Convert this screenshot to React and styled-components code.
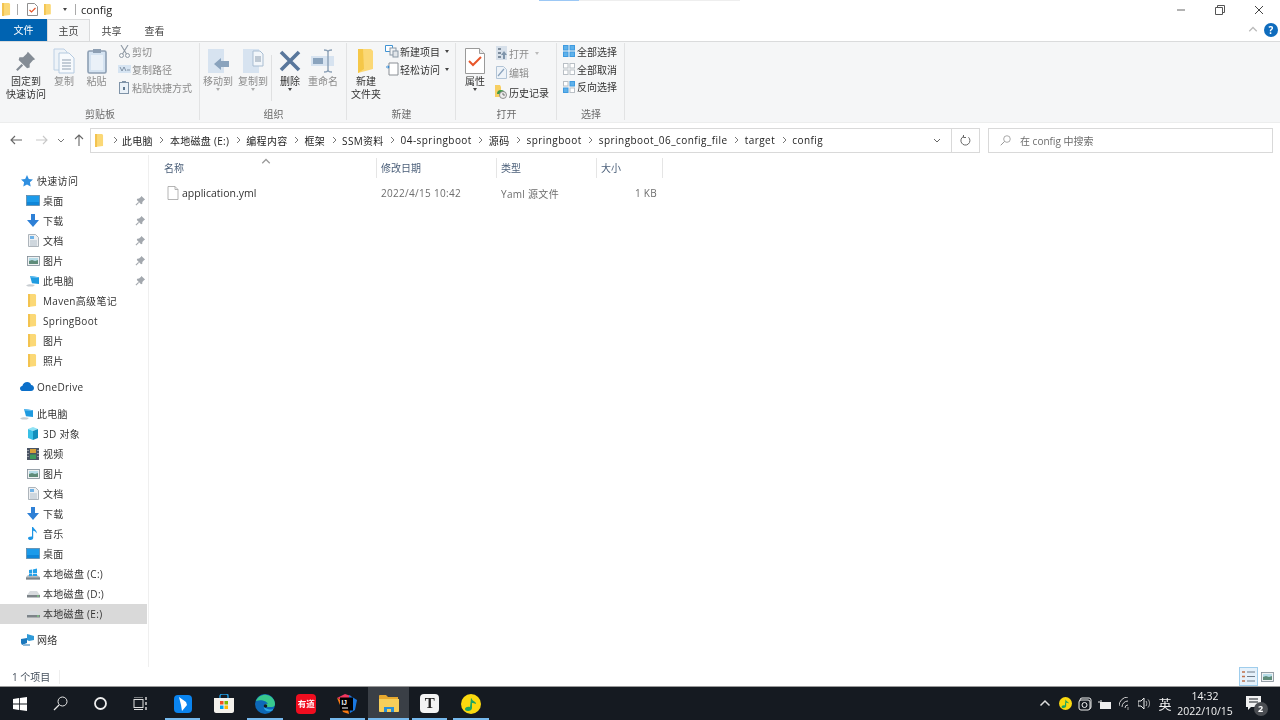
import styled, { createGlobalStyle } from 'styled-components';

const GlobalStyle = createGlobalStyle`
    html, body {
        margin: 0;
        padding: 0;
        background: #fff;
        overflow: hidden;
    }
    body {
        font-family: "Open Sans", "Noto Sans CJK SC", sans-serif;
        font-size: 10px;
        color: #333;
    }
    * { box-sizing: border-box; }
    svg { display: block; flex-shrink: 0; }
`;

const Page = styled.div`
    position: relative;
    width: 1280px;
    height: 720px;
    display: flex;
    flex-direction: column;
    overflow: hidden;
    filter: blur(0.3px);
`;

const TopGlow = styled.div`
    position: absolute;
    top: 0;
    left: 539px;
    width: 201px;
    height: 1px;
    background: linear-gradient(90deg, #9cc8f5 0, #9cc8f5 40px, #eee 40px);
`;

/* title bar */
const TitleBar = styled.div`
    height: 19px;
    display: flex;
    align-items: center;
    flex-shrink: 0;
`;

const QuickTools = styled.div`
    display: flex;
    align-items: center;
    padding-left: 2px;
`;

const TitleSep = styled.div`
    width: 1px;
    height: 11px;
    background: #aaa;
    margin: 0 ${p => p.$r}px 0 ${p => p.$l}px;
`;

const TitleIcon = styled.div`
    width: 14px;
    display: flex;
    justify-content: center;
    margin-right: 2px;
`;

const TitleText = styled.div`
    font-size: 11px;
    color: #222;
`;

const WinControls = styled.div`
    margin-left: auto;
    display: flex;
    padding-right: 2px;
`;

const WinBtn = styled.div`
    width: 39px;
    height: 19px;
    display: flex;
    align-items: center;
    justify-content: center;
`;

/* tabs */
const TabBar = styled.div`
    height: 22px;
    display: flex;
    align-items: stretch;
    flex-shrink: 0;
    position: relative;
`;

const FileTab = styled.div`
    width: 47px;
    background: #0063b1;
    color: #fff;
    display: flex;
    align-items: center;
    justify-content: center;
    padding-bottom: 1px;
`;

const Tab = styled.div`
    width: 43px;
    display: flex;
    align-items: center;
    justify-content: center;
    padding-bottom: 1px;
    color: #444;
    background: ${p => (p.$active ? '#f5f6f7' : 'transparent')};
    border: 1px solid ${p => (p.$active ? '#dadbdc' : 'transparent')};
    border-bottom: none;
`;

const TabTools = styled.div`
    margin-left: auto;
    display: flex;
    align-items: center;
    gap: 6px;
    padding-right: 2px;
`;

const HelpDot = styled.div`
    width: 14px;
    height: 14px;
    border-radius: 50%;
    background: #0f6cbd;
    color: #fff;
    font-size: 10px;
    font-weight: 700;
    line-height: 14px;
    text-align: center;
`;

/* ribbon */
const Ribbon = styled.div`
    height: 82px;
    flex-shrink: 0;
    display: flex;
    background: #f5f6f7;
    border-top: 1px solid #dadbdc;
    border-bottom: 1px solid #eceded;
`;

const Group = styled.div`
    width: ${p => p.$w}px;
    display: flex;
    flex-direction: column;
    position: relative;
    &::after {
        content: '';
        position: absolute;
        right: 0;
        top: 1px;
        bottom: 2px;
        width: 1px;
        background: #e2e3e4;
    }
`;

const GroupBody = styled.div`
    height: 65px;
    display: flex;
    padding-left: ${p => p.$pl || 0}px;
`;

const GroupLabel = styled.div`
    height: 14px;
    line-height: 14px;
    text-align: center;
    color: #6a6a6a;
`;

const BigBtn = styled.div`
    width: ${p => p.$w}px;
    flex-shrink: 0;
    display: flex;
    flex-direction: column;
    align-items: center;
    padding-top: 4px;
    color: ${p => (p.$off ? '#8c8c8c' : '#333')};
    line-height: 13px;
    text-align: center;
    white-space: nowrap;
`;

const BigIcon = styled.div`
    height: 29px;
    display: flex;
    align-items: center;
    justify-content: center;
`;

const Caret = styled.div`
    width: 0;
    height: 0;
    margin: ${p => p.$m || '0 auto'};
    border-left: 2.5px solid transparent;
    border-right: 2.5px solid transparent;
    border-top: 3px solid ${p => p.$c || '#444'};
`;

const VLine = styled.div`
    width: 1px;
    height: 46px;
    margin: 13px 1px 0;
    background: #dfe0e1;
`;

const Stack = styled.div`
    display: flex;
    flex-direction: column;
    padding-top: ${p => p.$top}px;
`;

const StackItem = styled.div`
    height: ${p => p.$h}px;
    display: flex;
    align-items: center;
    gap: 1px;
    color: ${p => (p.$off ? '#8c8c8c' : '#333')};
    white-space: nowrap;
`;

const IconSlot = styled.div`
    width: 14px;
    height: 14px;
    display: flex;
    align-items: center;
    justify-content: center;
    flex-shrink: 0;
`;

/* address row */
const NavRow = styled.div`
    height: 30px;
    margin-top: 2px;
    flex-shrink: 0;
    display: flex;
    align-items: center;
`;

const NavBtns = styled.div`
    width: 90px;
    display: flex;
    align-items: center;
`;

const NavBtn = styled.div`
    width: ${p => p.$w}px;
    display: flex;
    justify-content: center;
`;

const AddressBox = styled.div`
    width: 890px;
    height: 25px;
    border: 1px solid #d9d9d9;
    display: flex;
    align-items: center;
    padding-left: 2px;
`;

const Crumb = styled.div`
    display: flex;
    align-items: center;
    color: #222;
    white-space: nowrap;
    letter-spacing: ${p => (p.$latin ? '.45px' : '.3px')};
`;

const CrumbArrow = styled.div`
    width: ${p => (p.$first ? 15 : 17)}px;
    display: flex;
    justify-content: center;
`;

const AddrEnd = styled.div`
    margin-left: auto;
    display: flex;
    align-items: center;
    height: 100%;
`;

const AddrDrop = styled.div`
    width: 28px;
    height: 100%;
    display: flex;
    align-items: center;
    justify-content: center;
    border-right: 1px solid #d9d9d9;
    padding-right: 2px;
`;

const AddrRefresh = styled.div`
    width: 27px;
    display: flex;
    justify-content: center;
`;

const SearchBox = styled.div`
    margin-left: 8px;
    width: 285px;
    height: 25px;
    border: 1px solid #d9d9d9;
    display: flex;
    align-items: center;
    gap: 9px;
    padding-left: 11px;
    color: #6d6d6d;
`;

/* main area */
const Body = styled.div`
    flex: 1;
    min-height: 0;
    display: flex;
`;

const Sidebar = styled.div`
    width: 149px;
    flex-shrink: 0;
    padding-top: 15.5px;
    border-right: 1px solid #efefef;
    margin-right: 6px;
`;

const SideRow = styled.div`
    width: 147px;
    height: 20px;
    display: flex;
    align-items: center;
    gap: 3px;
    padding-left: ${p => (p.$top ? 20 : 26)}px;
    padding-right: 1px;
    margin-top: ${p => p.$gap || 0}px;
    background: ${p => (p.$sel ? '#d9d9d9' : 'transparent')};
    color: #333;
    white-space: nowrap;
    letter-spacing: .3px;
`;

const PinSlot = styled.div`
    margin-left: auto;
`;

const Content = styled.div`
    flex: 1;
    min-width: 0;
`;

const FileGrid = styled.div`
    display: grid;
    grid-template-columns: 222px 120px 100px 66px;
    height: 20px;
    align-items: center;
`;

const HeaderRow = styled(FileGrid)`
    margin-top: 2.5px;
    color: #4c607a;
`;

const HeaderCell = styled.div`
    position: relative;
    height: 100%;
    display: flex;
    align-items: center;
    padding-left: ${p => p.$pl || 4}px;
    border-right: 1px solid #e5e5e5;
`;

const SortMark = styled.div`
    position: absolute;
    left: 50%;
    top: -1px;
    margin-left: -5px;
`;

const FileRow = styled(FileGrid)`
    margin-top: 5.5px;
    color: #6d6d6d;
`;

const NameCell = styled.div`
    display: flex;
    align-items: center;
    gap: 3px;
    padding-left: 12px;
    color: #333;
    font-size: 10.5px;
`;

const Cell = styled.div`
    padding-left: 4px;
    padding-right: 6px;
    letter-spacing: .3px;
    text-align: ${p => (p.$right ? 'right' : 'left')};
`;

/* status */
const StatusBar = styled.div`
    height: 20px;
    flex-shrink: 0;
    display: flex;
    align-items: center;
    padding-left: 12px;
    border-bottom: 1px solid #9a9a9a;
    color: #444f5c;
`;

const StatusSep = styled.div`
    width: 1px;
    height: 14px;
    background: #eee;
    margin-left: 9px;
`;

const ViewBtns = styled.div`
    margin-left: auto;
    display: flex;
    align-items: center;
    padding-right: 3px;
`;

const ViewBtn = styled.div`
    width: 19px;
    height: 19px;
    display: flex;
    align-items: center;
    justify-content: center;
    background: ${p => (p.$active ? '#e5f1fb' : 'transparent')};
    border: 1px solid ${p => (p.$active ? '#9fcdec' : 'transparent')};
`;

/* taskbar */
const Taskbar = styled.div`
    height: 33px;
    flex-shrink: 0;
    display: flex;
    align-items: stretch;
    background: #151a21;
    color: #f2f2f2;
`;

const SysBtn = styled.div`
    width: 40px;
    display: flex;
    align-items: center;
    justify-content: center;
`;

const Apps = styled.div`
    margin-left: 2px;
    display: flex;
`;

const AppBtn = styled.div`
    position: relative;
    width: 41.2px;
    display: flex;
    align-items: center;
    justify-content: center;
    background: ${p => (p.$active ? '#3a3f46' : 'transparent')};
    &::after {
        content: '';
        display: ${p => (p.$open ? 'block' : 'none')};
        position: absolute;
        left: ${p => (p.$active ? 0 : 3)}px;
        right: ${p => (p.$active ? 0 : 3)}px;
        bottom: 0;
        height: 2px;
        background: #76b9ed;
    }
`;

const Tray = styled.div`
    margin-left: auto;
    display: flex;
    align-items: stretch;
`;

const TrayItem = styled.div`
    width: 20px;
    display: flex;
    align-items: center;
    justify-content: center;
    font-size: ${p => (p.$text ? '13px' : 'inherit')};
`;

const Clock = styled.div`
    width: 60px;
    display: flex;
    flex-direction: column;
    align-items: center;
    justify-content: center;
    line-height: 15px;
    font-size: 10.5px;
    white-space: nowrap;
`;

const Notify = styled.div`
    width: 45px;
    display: flex;
    align-items: center;
    justify-content: center;
    padding-right: 8px;
    position: relative;
`;

const NotifyBadge = styled.div`
    position: absolute;
    left: 18.500px;
    top: 15px;
    width: 14px;
    height: 14px;
    border-radius: 50%;
    background: #4a4d52;
    color: #fff;
    font-size: 9px;
    font-weight: 700;
    line-height: 14px;
    text-align: center;
`;

const FolderSmall = ({ h = 13 }) => (
    <svg width={h * 0.7} height={h} viewBox="0 0 9 13">
        <path d="M0 0h7l1 1v11l-8 1z" fill="#fbd876" />
        <path d="M0 0h2v13H0z" fill="#f3c34f" />
    </svg>
);

const Pin = ({ size = 11, c = '#a3a8ae' }) => (
    <svg width={size} height={size} viewBox="0 0 12 12">
        <path d="M7 1l4 4-1.2.6L8 7.600 8 9.600 6.600 10 2 5.400 2.400 4l2-.1 2-1.800z" fill={c} />
        <path d="M4 8L1 11" stroke={c} strokeWidth="1.200" />
    </svg>
);

const Chevron = ({ dir = 'right', c = '#777', size = 8 }) => {
    const d = {
        right: 'M3 1l3 3-3 3',
        down: 'M1 3l3 3 3-3',
        up: 'M1 5l3-3 3 3',
    }[dir];
    return (
        <svg width={size} height={size} viewBox="0 0 8 8">
            <path d={d} fill="none" stroke={c} strokeWidth="1" />
        </svg>
    );
};

const StarIcon = () => (
    <svg width="12" height="12" viewBox="0 0 12 12">
        <path d="M6 0l1.800 3.900 4.200.5-3.100 2.900.8 4.200L6 9.400l-3.700 2.100.8-4.200L0 4.400l4.200-.5z" fill="#2f8fe0" />
    </svg>
);

const DesktopIcon = () => (
    <svg width="14" height="11" viewBox="0 0 14 11">
        <rect x="0.5" y="0.5" width="13" height="10" fill="#1c9bea" stroke="#5e88a8" strokeWidth="0.8" />
        <path d="M1 7h12v3H1z" fill="#0f86d8" />
    </svg>
);

const DownloadIcon = () => (
    <svg width="12" height="13" viewBox="0 0 12 13">
        <path d="M4 0h4v6h4l-6 7-6-7h4z" fill="#2e80d6" />
    </svg>
);

const DocIcon = () => (
    <svg width="11" height="13" viewBox="0 0 11 13">
        <path d="M.5.5h7l3 3v9H.5z" fill="#eef0f2" stroke="#9aa3ab" strokeWidth=".8" />
        <path d="M2 2h4v3H2z" fill="#6fb2e6" />
        <path d="M2 7h7M2 9h7M2 11h7" stroke="#9fb0bf" strokeWidth=".8" />
    </svg>
);

const PictureIcon = () => (
    <svg width="13" height="10" viewBox="0 0 13 10">
        <rect x=".5" y=".5" width="12" height="9" fill="#f0f2f3" stroke="#7f8a94" strokeWidth=".8" />
        <path d="M2 2h9v3H2z" fill="#b6dce8" />
        <path d="M2 5l3-1 3 1 3-1v4H2z" fill="#5f8c7a" />
    </svg>
);

const PcIcon = () => (
    <svg width="14" height="12" viewBox="0 0 14 12">
        <path d="M0 10.500c2-1.500 6-1.500 9-.5l-2 1.500H2z" fill="#c9ced2" />
        <path d="M4 1l9 1.200V9L6 8.200z" fill="#1f9be0" />
        <path d="M4 1l9 1.200-2 .8L5 2.400z" fill="#62bdf0" />
    </svg>
);

const CloudIcon = () => (
    <svg width="14" height="9" viewBox="0 0 14 9">
        <path d="M3 9C1 9 0 7.800 0 6.400 0 5 1 4 2.300 3.900 3 1.600 5 0 7.200 0c2 0 3.500 1.200 4 3 1.600.2 2.800 1.500 2.800 3 0 1.700-1.300 3-3 3z" fill="#0b6fc9" />
    </svg>
);

const CubeIcon = () => (
    <svg width="12" height="13" viewBox="0 0 12 13">
        <path d="M1 2l5-2 5 2-5 2z" fill="#8fe3f5" />
        <path d="M1 2l5 2v9L1 11z" fill="#38c0e6" />
        <path d="M11 2L6 4v9l5-2z" fill="#128fbc" />
    </svg>
);

const VideoIcon = () => (
    <svg width="12" height="12" viewBox="0 0 12 12">
        <rect width="12" height="12" fill="#4a5464" />
        <path d="M3 1h6v4H3z" fill="#d6a13b" />
        <path d="M3 6.500h6v4.500H3z" fill="#3d9a5b" />
        <path d="M1 2v1M1 5v1M1 8v1M11 2v1M11 5v1M11 8v1" stroke="#ddd" strokeWidth="1" />
    </svg>
);

const MusicIcon = () => (
    <svg width="10" height="13" viewBox="0 0 10 13">
        <path d="M4 0h1.200c.3 2 4 3 3.500 6.500C8 5 6.500 4 5.200 3.800V11c0 1.300-1.300 2-2.600 2S0 12.300 0 11.200 1.500 9.300 4 9.500z" fill="#1e96e6" />
    </svg>
);

const DiskIcon = () => (
    <svg width="13" height="8" viewBox="0 0 13 8">
        <path d="M3 1h7l3 4v2H0V5z" fill="#d8dbde" />
        <path d="M0 5h13v2.500H0z" fill="#7d8489" />
        <path d="M10 6h2" stroke="#7fe07f" strokeWidth="1" />
    </svg>
);

const SystemDiskIcon = () => (
    <svg width="14" height="13" viewBox="0 0 14 13">
        <path d="M2 8h9l3 2v2.500H0V10z" fill="#b8bdc2" />
        <path d="M0 10.500h14v2H0z" fill="#7d8489" />
        <path d="M3 3l3-.5V6l-3 .4zM6.800 2.400L11 1.600V6L6.800 6zM3 7l3-.4V9L3 9.300zM6.800 6.700H11V9H6.800z" fill="#24a0e8" />
    </svg>
);

const NetworkIcon = () => (
    <svg width="13" height="12" viewBox="0 0 13 12">
        <path d="M6 0l7 2v4L8 7 6 6z" fill="#2f9ad8" />
        <path d="M0 5l6-1v5l-5 2-1-2z" fill="#1a78bd" />
        <path d="M2 10h7v2H2z" fill="#8fb9d8" />
    </svg>
);

const FileIcon = () => (
    <svg width="12" height="14" viewBox="0 0 12 14">
        <path d="M1 .5h7l3 3v10H1z" fill="#fff" stroke="#a2a2a2" strokeWidth=".8" />
        <path d="M8 .5v3h3" fill="none" stroke="#a2a2a2" strokeWidth=".8" />
    </svg>
);

const CopyBig = () => (
    <svg width="22" height="26" viewBox="0 0 22 26">
        <path d="M1 1h10l3 3v18H1z" fill="#eef3f8" stroke="#bcd0e4" />
        <path d="M6 5h10l5 5v15H6z" fill="#f7fafd" stroke="#b5cae0" />
        <path d="M9 12h9M9 15h9M9 18h9M9 21h9" stroke="#8f9fb0" />
    </svg>
);

const PasteBig = () => (
    <svg width="20" height="26" viewBox="0 0 20 26">
        <rect x="1" y="3" width="18" height="22" rx="1.500" fill="#d5e3f1" stroke="#8d9fb3" strokeWidth="1.600" />
        <rect x="4" y="7" width="12" height="15" fill="#eaf1f8" />
        <path d="M6 5V1h8v4z" fill="#8d9fb3" />
    </svg>
);

const ScissorsIcon = () => (
    <svg width="11" height="13" viewBox="0 0 11 13">
        <path d="M2 0l5.500 9M9 0L3.500 9" stroke="#8f99a4" strokeWidth="1.100" fill="none" />
        <circle cx="2.500" cy="10.500" r="2" fill="none" stroke="#8f99a4" />
        <circle cx="8.500" cy="10.500" r="2" fill="none" stroke="#8f99a4" />
    </svg>
);

const PathIcon = () => (
    <svg width="13" height="8" viewBox="0 0 13 8">
        <rect width="13" height="8" fill="#d6e4f2" />
        <path d="M2 2l2 4 2-4 2 4M9 5h3" stroke="#6c7f94" strokeWidth=".8" fill="none" />
    </svg>
);

const PasteLinkIcon = () => (
    <svg width="10" height="13" viewBox="0 0 10 13">
        <rect x=".5" y="1.500" width="9" height="11" fill="#eaf1f8" stroke="#7f93a8" />
        <path d="M3 2V0h4v2z" fill="#7f93a8" />
        <path d="M4 6h2v3H4z" fill="#607890" />
    </svg>
);

const MoveToIcon = ({ copy }) => (
    <svg width="24" height="26" viewBox="0 0 24 26">
        <path d="M2 1h16v24H2z" fill="#d7e3f0" />
        {copy && <path d="M12 3h7l3 3v12H12z" fill="#f2f6fa" stroke="#a9bdd2" />}
        {copy && <path d="M14 9h6M14 11h6M14 13h6" stroke="#8a9bad" />}
        {!copy && <path d="M8 16l7-6v3h8v6h-8v3z" fill="#8aa3bd" />}
    </svg>
);

const DeleteIcon = () => (
    <svg width="22" height="22" viewBox="0 0 22 22">
        <path d="M2 2l18 18M20 2L2 20" stroke="#59779c" strokeWidth="3.600" />
    </svg>
);

const RenameIcon = () => (
    <svg width="26" height="24" viewBox="0 0 26 24">
        <rect x="1" y="7" width="23" height="10" fill="#d7e3f0" />
        <rect x="3" y="9" width="10" height="6" fill="#8aa3bd" />
        <path d="M14 1c3 0 4 1 4 2v18c0 1-1 2-4 2M22 1c-3 0-4 1-4 2v18c0 1 1 2 4 2" fill="none" stroke="#8a9fb5" strokeWidth="1.400" />
    </svg>
);

const NewFolderBig = () => (
    <svg width="16" height="24" viewBox="0 0 16 24">
        <path d="M0 0h13l2 2v18L0 24z" fill="#fbd876" />
        <path d="M0 0h5l1 20-6 4z" fill="#f5c748" />
    </svg>
);

const NewItemIcon = () => (
    <svg width="14" height="13" viewBox="0 0 14 13">
        <path d="M.5 .5h7v6h-7z" fill="#fff" stroke="#3f93d4" />
        <rect x="5" y="3" width="6" height="7" fill="#f2f4f6" stroke="#8a98a6" />
        <rect x="8" y="6" width="5" height="6" fill="#e2e6ea" stroke="#8a98a6" />
    </svg>
);

const EasyIcon = () => (
    <svg width="13" height="14" viewBox="0 0 13 14">
        <path d="M3 1h9v12H3z" fill="#fff" stroke="#8a8f95" />
        <path d="M0 5h3M3 5l-1-1.500M3 5L2 6.500" stroke="#2e86d1" strokeWidth="1" fill="none" />
    </svg>
);

const PropsBig = () => (
    <svg width="20" height="26" viewBox="0 0 20 26">
        <path d="M.5.5h14l5 5v20H.5z" fill="#fff" stroke="#9a9a9a" />
        <path d="M14.500.5v5h5" fill="#e8e8e8" stroke="#9a9a9a" />
        <path d="M4 13l4 4 8-8" fill="none" stroke="#e8562a" strokeWidth="2" />
    </svg>
);

const PropsSmall = () => (
    <svg width="11" height="13" viewBox="0 0 11 13">
        <path d="M.5.5h7l3 3v9H.5z" fill="#fff" stroke="#8f8f8f" />
        <path d="M2.500 7l2 2 4-4" fill="none" stroke="#e8562a" strokeWidth="1.200" />
    </svg>
);

const OpenIcon = () => (
    <svg width="11" height="14" viewBox="0 0 11 14">
        <rect width="11" height="14" fill="#d7e0ea" />
        <path d="M2 2h3v2H2zM2 6h3v2H2zM2 10h3v2H2z" fill="#7d8d9d" />
        <path d="M8 5l3 4H9v4H7V9H5z" fill="#7f95ab" />
    </svg>
);

const EditIcon = () => (
    <svg width="11" height="13" viewBox="0 0 11 13">
        <path d="M.5.5h7l3 3v9H.5z" fill="#eef3f8" stroke="#b2c4d6" />
        <path d="M2 10l6-7" stroke="#8aa3bd" strokeWidth="1.200" />
    </svg>
);

const HistoryIcon = () => (
    <svg width="13" height="14" viewBox="0 0 13 14">
        <path d="M0 0h5l1 2v10H0z" fill="#f7cf62" />
        <path d="M2 9a4 4 0 018 0z" fill="#3f9b4a" />
        <circle cx="8" cy="10" r="3.500" fill="#eee" stroke="#777" strokeWidth=".8" />
        <path d="M8 8v2h2" stroke="#555" strokeWidth=".8" fill="none" />
    </svg>
);

const SelectGrid = ({ fills }) => (
    <svg width="12" height="12" viewBox="0 0 12 12">
        {[[0, 0], [6.500, 0], [0, 6.500], [6.500, 6.500]].map(([x, y], i) => (
            <rect key={i} x={x + 0.5} y={y + 0.5} width="4.500" height="4.500" fill={fills[i] ? '#5eb1ea' : '#fff'} stroke={fills[i] ? '#3f9ae0' : '#b9bfc5'} />
        ))}
    </svg>
);

const WindowsLogo = () => (
    <svg width="14" height="14" viewBox="0 0 14 14">
        <path d="M0 2l6-.9v5.500H0zM6.800 1L14 0v6.600H6.800zM0 7.400h6v5.500l-6-.9zM6.800 7.400H14V14l-7.200-1z" fill="#fff" />
    </svg>
);

const SearchGlyph = ({ c = '#e8e8e8', size = 15 }) => (
    <svg width={size} height={size} viewBox="0 0 15 15">
        <circle cx="9.500" cy="5.500" r="4.500" fill="none" stroke={c} strokeWidth="1" />
        <path d="M6 9l-5 5" stroke={c} strokeWidth="1.200" />
    </svg>
);

const TaskViewIcon = () => (
    <svg width="15" height="13" viewBox="0 0 15 13">
        <path d="M1 0h9M1 12.500h9" stroke="#ddd" strokeWidth="1" />
        <rect x="1" y="2.500" width="9" height="8" fill="none" stroke="#ddd" />
        <path d="M13 0v3M13 5v3M13 10v3" stroke="#ddd" strokeWidth="1.400" />
    </svg>
);

const FeishuLike = () => (
    <svg width="18" height="18" viewBox="0 0 18 18">
        <rect width="18" height="18" rx="4" fill="#0a84ef" />
        <path d="M5 2l7 5 1 3-5 6-1-6z" fill="#fff" />
    </svg>
);

const StoreIcon = () => (
    <svg width="20" height="19" viewBox="0 0 20 19">
        <path d="M6 4V2c0-1 1-2 2-2h4c1 0 2 1 2 2v2" fill="none" stroke="#1f9be0" strokeWidth="1.400" />
        <path d="M0 4h20v13c0 1-1 2-2 2H2c-1 0-2-1-2-2z" fill="#f3f1ec" />
        <path d="M6 7h3.500v3.500H6z" fill="#f25022" />
        <path d="M10.500 7H14v3.500h-3.500z" fill="#7fba00" />
        <path d="M6 11.500h3.500V15H6z" fill="#00a4ef" />
        <path d="M10.500 11.500H14V15h-3.500z" fill="#ffb900" />
    </svg>
);

const EdgeIcon = () => (
    <svg width="20" height="20" viewBox="0 0 20 20">
        <circle cx="10" cy="10" r="10" fill="#0d68b8" />
        <path d="M1 7c2-5 7-7 11-6 5 1 8 5 8 9 0 2-1 3-3 3H9c0-3 3-4 4-3-1-3-7-5-12-3z" fill="#38c98e" />
        <path d="M9 12c-1 4 3 6 7 5 1 0 2-1 2-2-3 1-6 1-9-3z" fill="#2aa7e8" />
        <circle cx="10.500" cy="12" r="1.800" fill="#151a21" />
    </svg>
);

const YoudaoIcon = styled.div`
    width: 20px;
    height: 20px;
    border-radius: 4px;
    background: #f00d1f;
    color: #fff;
    font-size: 8.5px;
    font-weight: 700;
    line-height: 20px;
    text-align: center;
    white-space: nowrap;
`;

const IdeaIcon = () => (
    <svg width="20" height="20" viewBox="0 0 20 20">
        <path d="M0 4l8-4 6 2-5 6z" fill="#f2375f" />
        <path d="M12 1l8 5-2 10-5 3z" fill="#1a78e0" />
        <path d="M0 4l6 14 6 2-2-10z" fill="#f97a12" />
        <rect x="3" y="3.500" width="13" height="13" fill="#000" />
        <path d="M5 14h6" stroke="#fff" strokeWidth="1" />
        <text x="4.500" y="10.500" fontSize="6.500" fontWeight="700" fill="#fff" fontFamily="Liberation Sans, sans-serif">IJ</text>
    </svg>
);

const ExplorerIcon = () => (
    <svg width="20" height="17" viewBox="0 0 20 17">
        <path d="M0 1c0-.5.500-1 1-1h6l2 2h10v3H0z" fill="#e8a92e" />
        <path d="M0 4h20v12c0 .5-.500 1-1 1H1c-.500 0-1-.500-1-1z" fill="#f7cf5a" />
        <path d="M5 12h10v5H5z" fill="#2a8fd6" />
        <path d="M8 14h4v3H8z" fill="#f7cf5a" />
    </svg>
);

const TyporaIcon = styled.div`
    width: 19px;
    height: 19px;
    border-radius: 4px;
    background: #f4f4f4;
    color: #222;
    font-family: "Liberation Serif", serif;
    font-size: 15px;
    font-weight: 700;
    line-height: 19px;
    text-align: center;
`;

const QQMusic = ({ size = 20 }) => (
    <svg width={size} height={size} viewBox="0 0 20 20">
        <circle cx="10" cy="10" r="10" fill="#fbd90f" />
        <path d="M10 4l1 1c0 2 4 2 4 5-2-1-3-1-4-1v5c0 2-2 3-4 3s-3-1-3-2 2-3 5-2z" fill="#1fa560" />
    </svg>
);

const ChatBubble = () => (
    <svg width="15" height="15" viewBox="0 0 15 15">
        <path d="M0 0h15v11H5l-3 3v-3H0z" fill="#f2f2f2" />
        <path d="M3 3h9M3 6h9" stroke="#151a21" strokeWidth="1" />
    </svg>
);

const TrayBox = () => (
    <svg width="14" height="14" viewBox="0 0 14 14">
        <rect x="2" y="1" width="11" height="11" rx="2" fill="none" stroke="#eee" />
        <rect x="1" y="3" width="11" height="10" rx="2" fill="#151a21" stroke="#eee" />
        <circle cx="6.500" cy="8" r="2.500" fill="none" stroke="#eee" />
    </svg>
);

const BatteryIcon = () => (
    <svg width="14" height="10" viewBox="0 0 14 10">
        <path d="M1 2v2M3 1v2" stroke="#eee" />
        <rect x="2" y="3" width="11" height="7" fill="#eee" />
    </svg>
);

const WifiIcon = () => (
    <svg width="13" height="13" viewBox="0 0 13 13">
        <path d="M0 9a9 9 0 019-9M3 10a6 6 0 016-6M6 11a3 3 0 013-3" fill="none" stroke="#cfcfcf" strokeWidth="1" />
        <path d="M9 10v3" stroke="#999" strokeWidth="1" />
    </svg>
);

const VolumeIcon = () => (
    <svg width="14" height="13" viewBox="0 0 14 13">
        <path d="M0 4h3l3-3v11L3 9H0z" fill="none" stroke="#eee" />
        <path d="M8 4c1 1.500 1 3.500 0 5M10 2.500c2 2 2 6 0 8" fill="none" stroke="#bbb" />
    </svg>
);

const SmallCaret = styled(Caret)`
    margin: 0 0 0 ${p => p.$ml}px;
`;

const crumbs = [
    { name: '此电脑' },
    { name: '本地磁盘 (E:)' },
    { name: '编程内容' },
    { name: '框架' },
    { name: 'SSM资料' },
    { name: '04-springboot', latin: true },
    { name: '源码' },
    { name: 'springboot', latin: true },
    { name: 'springboot_06_config_file', latin: true },
    { name: 'target', latin: true },
    { name: 'config', latin: true },
];

const quick = [
    { name: '桌面', icon: <DesktopIcon />, pin: true },
    { name: '下载', icon: <DownloadIcon />, pin: true },
    { name: '文档', icon: <DocIcon />, pin: true },
    { name: '图片', icon: <PictureIcon />, pin: true },
    { name: '此电脑', icon: <PcIcon />, pin: true },
    { name: 'Maven高级笔记', icon: <FolderSmall /> },
    { name: 'SpringBoot', icon: <FolderSmall /> },
    { name: '图片', icon: <FolderSmall /> },
    { name: '照片', icon: <FolderSmall /> },
];

const pcItems = [
    { name: '3D 对象', icon: <CubeIcon /> },
    { name: '视频', icon: <VideoIcon /> },
    { name: '图片', icon: <PictureIcon /> },
    { name: '文档', icon: <DocIcon /> },
    { name: '下载', icon: <DownloadIcon /> },
    { name: '音乐', icon: <MusicIcon /> },
    { name: '桌面', icon: <DesktopIcon /> },
    { name: '本地磁盘 (C:)', icon: <SystemDiskIcon /> },
    { name: '本地磁盘 (D:)', icon: <DiskIcon /> },
    { name: '本地磁盘 (E:)', icon: <DiskIcon />, sel: true },
];

function SideItem({ item }) {
    return (
        <SideRow $sel={item.sel}>
            <IconSlot>{item.icon}</IconSlot>
            {item.name}
            {item.pin && <PinSlot><Pin /></PinSlot>}
        </SideRow>
    );
}

export default function App() {
    return (
        <Page>
            <GlobalStyle />
            <TopGlow />
            <TitleBar>
                <QuickTools>
                    <FolderSmall h={13} />
                    <TitleSep $l={6} $r={7} />
                    <TitleIcon><PropsSmall /></TitleIcon>
                    <TitleIcon><FolderSmall h={11} /></TitleIcon>
                    <Caret $m="0 0 0 6px" />
                    <TitleSep $l={8} $r={5} />
                </QuickTools>
                <TitleText>config</TitleText>
                <WinControls>
                    <WinBtn>
                        <svg width="10" height="10" viewBox="0 0 10 10"><path d="M1 5h8" stroke="#666" strokeWidth="1" /></svg>
                    </WinBtn>
                    <WinBtn>
                        <svg width="10" height="10" viewBox="0 0 10 10"><path d="M.5 2.500h7v7h-7zM2.500 2.500v-2h7v7h-2" fill="none" stroke="#555" strokeWidth="1" /></svg>
                    </WinBtn>
                    <WinBtn>
                        <svg width="10" height="10" viewBox="0 0 10 10"><path d="M1 1l8 8M9 1L1 9" stroke="#444" strokeWidth="1" /></svg>
                    </WinBtn>
                </WinControls>
            </TitleBar>

            <TabBar>
                <FileTab>文件</FileTab>
                <Tab $active>主页</Tab>
                <Tab>共享</Tab>
                <Tab>查看</Tab>
                <TabTools>
                    <Chevron dir="up" c="#bbb" size={10} />
                    <HelpDot>?</HelpDot>
                </TabTools>
            </TabBar>

            <Ribbon>
                <Group $w={200}>
                    <GroupBody>
                        <BigBtn $w={52}>
                            <BigIcon><Pin size={22} c="#848c95" /></BigIcon>
                            固定到<br />快速访问
                        </BigBtn>
                        <BigBtn $w={24} $off>
                            <BigIcon><CopyBig /></BigIcon>
                            复制
                        </BigBtn>
                        <BigBtn $w={41} $off>
                            <BigIcon><PasteBig /></BigIcon>
                            粘贴
                        </BigBtn>
                        <Stack $top={0}>
                            <StackItem $h={18} $off><IconSlot><ScissorsIcon /></IconSlot>剪切</StackItem>
                            <StackItem $h={18} $off><IconSlot><PathIcon /></IconSlot>复制路径</StackItem>
                            <StackItem $h={18} $off><IconSlot><PasteLinkIcon /></IconSlot>粘贴快捷方式</StackItem>
                        </Stack>
                    </GroupBody>
                    <GroupLabel>剪贴板</GroupLabel>
                </Group>

                <Group $w={147}>
                    <GroupBody>
                        <BigBtn $w={36} $off>
                            <BigIcon><MoveToIcon /></BigIcon>
                            移动到
                            <Caret $c="#aaa" />
                        </BigBtn>
                        <BigBtn $w={34} $off>
                            <BigIcon><MoveToIcon copy /></BigIcon>
                            复制到
                            <Caret $c="#aaa" />
                        </BigBtn>
                        <VLine />
                        <BigBtn $w={34}>
                            <BigIcon><DeleteIcon /></BigIcon>
                            删除
                            <Caret />
                        </BigBtn>
                        <BigBtn $w={32} $off>
                            <BigIcon><RenameIcon /></BigIcon>
                            重命名
                        </BigBtn>
                    </GroupBody>
                    <GroupLabel>组织</GroupLabel>
                </Group>

                <Group $w={109}>
                    <GroupBody>
                        <BigBtn $w={38}>
                            <BigIcon><NewFolderBig /></BigIcon>
                            新建<br />文件夹
                        </BigBtn>
                        <Stack $top={0}>
                            <StackItem $h={18}><IconSlot><NewItemIcon /></IconSlot>新建项目<SmallCaret $ml={4} /></StackItem>
                            <StackItem $h={18}><IconSlot><EasyIcon /></IconSlot>轻松访问<SmallCaret $ml={4} /></StackItem>
                        </Stack>
                    </GroupBody>
                    <GroupLabel>新建</GroupLabel>
                </Group>

                <Group $w={101}>
                    <GroupBody>
                        <BigBtn $w={38}>
                            <BigIcon><PropsBig /></BigIcon>
                            属性
                            <Caret />
                        </BigBtn>
                        <Stack $top={1}>
                            <StackItem $h={20} $off><IconSlot><OpenIcon /></IconSlot>打开<SmallCaret $ml={5} $c="#bbb" /></StackItem>
                            <StackItem $h={19} $off><IconSlot><EditIcon /></IconSlot>编辑</StackItem>
                            <StackItem $h={20}><IconSlot><HistoryIcon /></IconSlot>历史记录</StackItem>
                        </Stack>
                    </GroupBody>
                    <GroupLabel>打开</GroupLabel>
                </Group>

                <Group $w={68}>
                    <GroupBody $pl={5}>
                        <Stack $top={0}>
                            <StackItem $h={18}><IconSlot><SelectGrid fills={[1, 1, 1, 1]} /></IconSlot>全部选择</StackItem>
                            <StackItem $h={18}><IconSlot><SelectGrid fills={[0, 0, 0, 0]} /></IconSlot>全部取消</StackItem>
                            <StackItem $h={17}><IconSlot><SelectGrid fills={[0, 1, 1, 0]} /></IconSlot>反向选择</StackItem>
                        </Stack>
                    </GroupBody>
                    <GroupLabel>选择</GroupLabel>
                </Group>
            </Ribbon>

            <NavRow>
                <NavBtns>
                    <NavBtn $w={32}>
                        <svg width="12" height="10" viewBox="0 0 12 10"><path d="M12 5H1M5 1L1 5l4 4" fill="none" stroke="#666" strokeWidth="1.100" /></svg>
                    </NavBtn>
                    <NavBtn $w={20}>
                        <svg width="12" height="10" viewBox="0 0 12 10"><path d="M0 5h11M7 1l4 4-4 4" fill="none" stroke="#c8c8c8" strokeWidth="1.100" /></svg>
                    </NavBtn>
                    <NavBtn $w={18}><Chevron dir="down" c="#777" /></NavBtn>
                    <NavBtn $w={18}>
                        <svg width="10" height="12" viewBox="0 0 10 12"><path d="M5 12V1M1 5l4-4 4 4" fill="none" stroke="#666" strokeWidth="1.100" /></svg>
                    </NavBtn>
                </NavBtns>
                <AddressBox>
                    <IconSlot><FolderSmall h={13} /></IconSlot>
                    {crumbs.map((c, i) => (
                        <Crumb key={c.name} $latin={c.latin}>
                            <CrumbArrow $first={i === 0}><Chevron /></CrumbArrow>
                            {c.name}
                        </Crumb>
                    ))}
                    <AddrEnd>
                        <AddrDrop><Chevron dir="down" c="#666" /></AddrDrop>
                        <AddrRefresh>
                            <svg width="11" height="11" viewBox="0 0 11 11"><path d="M3.500 1.500a4.500 4.500 0 105 .8M3.500 0v2.500H6" fill="none" stroke="#666" strokeWidth="1" /></svg>
                        </AddrRefresh>
                    </AddrEnd>
                </AddressBox>
                <SearchBox>
                    <SearchGlyph c="#8a8a8a" size={11} />
                    在 config 中搜索
                </SearchBox>
            </NavRow>

            <Body>
                <Sidebar>
                    <SideRow $top><IconSlot><StarIcon /></IconSlot>快速访问</SideRow>
                    {quick.map((item, i) => <SideItem key={i} item={item} />)}
                    <SideRow $top $gap={6}><IconSlot><CloudIcon /></IconSlot>OneDrive</SideRow>
                    <SideRow $top $gap={7}><IconSlot><PcIcon /></IconSlot>此电脑</SideRow>
                    {pcItems.map((item, i) => <SideItem key={i} item={item} />)}
                    <SideRow $top $gap={6}><IconSlot><NetworkIcon /></IconSlot>网络</SideRow>
                </Sidebar>
                <Content>
                    <HeaderRow>
                        <HeaderCell $pl={9}>
                            <SortMark><Chevron dir="up" c="#9a9a9a" size={10} /></SortMark>
                            名称
                        </HeaderCell>
                        <HeaderCell>修改日期</HeaderCell>
                        <HeaderCell>类型</HeaderCell>
                        <HeaderCell>大小</HeaderCell>
                    </HeaderRow>
                    <FileRow>
                        <NameCell><FileIcon />application.yml</NameCell>
                        <Cell>2022/4/15 10:42</Cell>
                        <Cell>Yaml 源文件</Cell>
                        <Cell $right>1 KB</Cell>
                    </FileRow>
                </Content>
            </Body>

            <StatusBar>
                1 个项目
                <StatusSep />
                <ViewBtns>
                    <ViewBtn $active>
                        <svg width="13" height="11" viewBox="0 0 13 11">
                            <path d="M0 1h3M0 5.500h3M0 10h3" stroke="#c0704a" strokeWidth="1.500" />
                            <path d="M5 1h8M5 5.500h8M5 10h8" stroke="#6f7c8a" strokeWidth="1" />
                        </svg>
                    </ViewBtn>
                    <ViewBtn><PictureIcon /></ViewBtn>
                </ViewBtns>
            </StatusBar>

            <Taskbar>
                <SysBtn><WindowsLogo /></SysBtn>
                <SysBtn><SearchGlyph /></SysBtn>
                <SysBtn>
                    <svg width="13" height="13" viewBox="0 0 13 13"><circle cx="6.500" cy="6.500" r="5.500" fill="none" stroke="#eee" strokeWidth="1.800" /></svg>
                </SysBtn>
                <SysBtn><TaskViewIcon /></SysBtn>
                <Apps>
                    <AppBtn $open><FeishuLike /></AppBtn>
                    <AppBtn><StoreIcon /></AppBtn>
                    <AppBtn $open><EdgeIcon /></AppBtn>
                    <AppBtn><YoudaoIcon>有道</YoudaoIcon></AppBtn>
                    <AppBtn $open><IdeaIcon /></AppBtn>
                    <AppBtn $open $active><ExplorerIcon /></AppBtn>
                    <AppBtn $open><TyporaIcon>T</TyporaIcon></AppBtn>
                    <AppBtn $open><QQMusic /></AppBtn>
                </Apps>
                <Tray>
                    <TrayItem><Chevron dir="up" c="#ddd" size={12} /></TrayItem>
                    <TrayItem><QQMusic size={13} /></TrayItem>
                    <TrayItem><TrayBox /></TrayItem>
                    <TrayItem><BatteryIcon /></TrayItem>
                    <TrayItem><WifiIcon /></TrayItem>
                    <TrayItem><VolumeIcon /></TrayItem>
                    <TrayItem $text>英</TrayItem>
                    <Clock>
                        <div>14:32</div>
                        <div>2022/10/15</div>
                    </Clock>
                    <Notify>
                        <ChatBubble />
                        <NotifyBadge>2</NotifyBadge>
                    </Notify>
                </Tray>
            </Taskbar>
        </Page>
    );
}
